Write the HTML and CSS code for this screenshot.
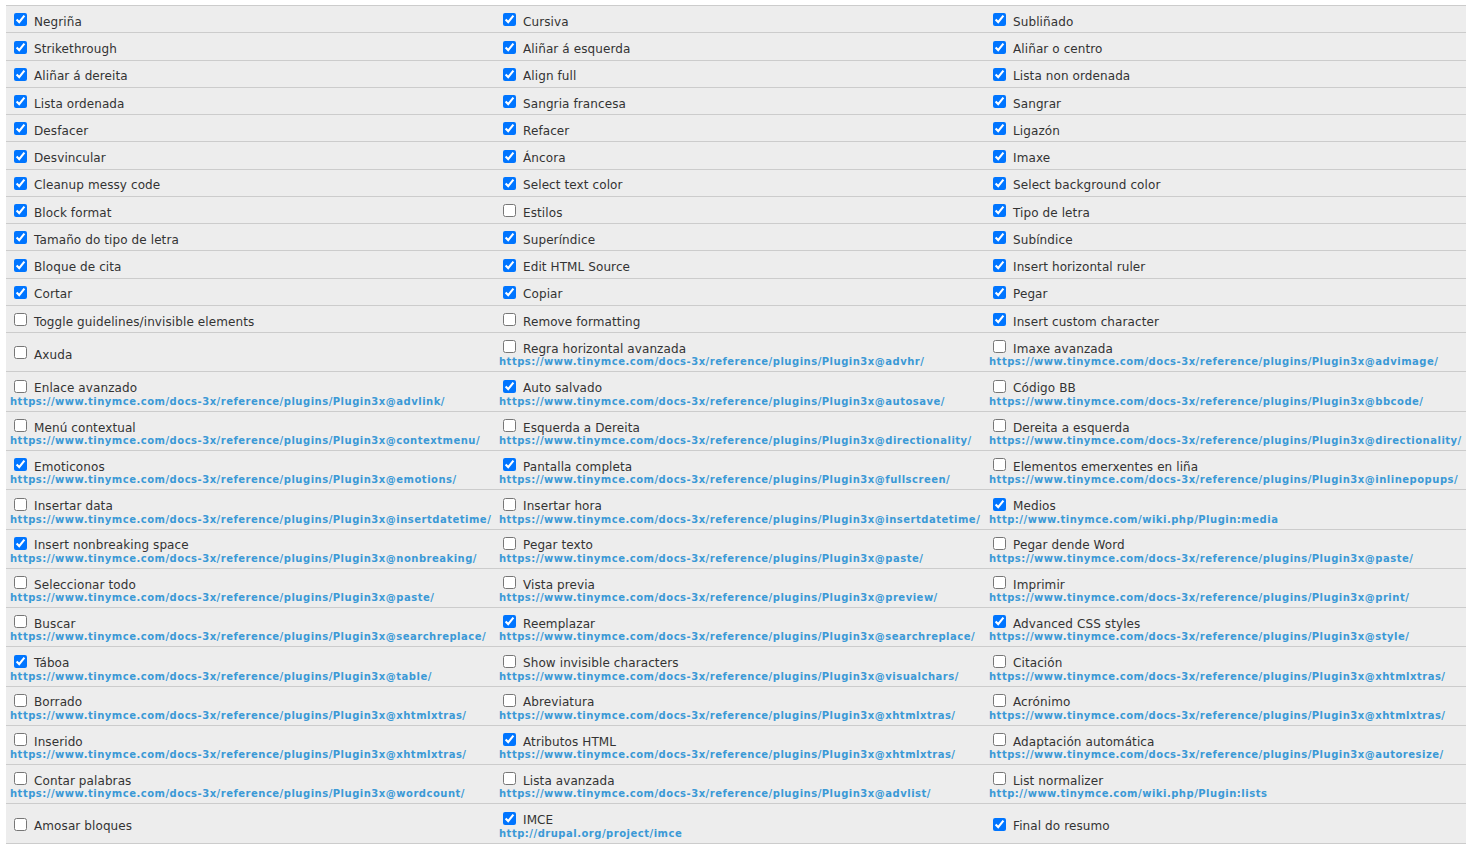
FILE: index.html
```html
<!DOCTYPE html>
<html lang="gl">
<head>
<meta charset="utf-8">
<title>Botóns e complementos</title>
<link rel="stylesheet" href="styles.css">
</head>
<body>
<table class="plugins">
<colgroup><col class="c1"><col class="c2"><col class="c3"></colgroup>
<tbody>
<tr>
<td><label class="opt"><input type="checkbox" checked><span>Negriña</span></label></td>
<td><label class="opt"><input type="checkbox" checked><span>Cursiva</span></label></td>
<td><label class="opt"><input type="checkbox" checked><span>Subliñado</span></label></td>
</tr>
<tr>
<td><label class="opt"><input type="checkbox" checked><span>Strikethrough</span></label></td>
<td><label class="opt"><input type="checkbox" checked><span>Aliñar á esquerda</span></label></td>
<td><label class="opt"><input type="checkbox" checked><span>Aliñar o centro</span></label></td>
</tr>
<tr>
<td><label class="opt"><input type="checkbox" checked><span>Aliñar á dereita</span></label></td>
<td><label class="opt"><input type="checkbox" checked><span>Align full</span></label></td>
<td><label class="opt"><input type="checkbox" checked><span>Lista non ordenada</span></label></td>
</tr>
<tr>
<td><label class="opt"><input type="checkbox" checked><span>Lista ordenada</span></label></td>
<td><label class="opt"><input type="checkbox" checked><span>Sangria francesa</span></label></td>
<td><label class="opt"><input type="checkbox" checked><span>Sangrar</span></label></td>
</tr>
<tr>
<td><label class="opt"><input type="checkbox" checked><span>Desfacer</span></label></td>
<td><label class="opt"><input type="checkbox" checked><span>Refacer</span></label></td>
<td><label class="opt"><input type="checkbox" checked><span>Ligazón</span></label></td>
</tr>
<tr>
<td><label class="opt"><input type="checkbox" checked><span>Desvincular</span></label></td>
<td><label class="opt"><input type="checkbox" checked><span>Áncora</span></label></td>
<td><label class="opt"><input type="checkbox" checked><span>Imaxe</span></label></td>
</tr>
<tr>
<td><label class="opt"><input type="checkbox" checked><span>Cleanup messy code</span></label></td>
<td><label class="opt"><input type="checkbox" checked><span>Select text color</span></label></td>
<td><label class="opt"><input type="checkbox" checked><span>Select background color</span></label></td>
</tr>
<tr>
<td><label class="opt"><input type="checkbox" checked><span>Block format</span></label></td>
<td><label class="opt"><input type="checkbox"><span>Estilos</span></label></td>
<td><label class="opt"><input type="checkbox" checked><span>Tipo de letra</span></label></td>
</tr>
<tr>
<td><label class="opt"><input type="checkbox" checked><span>Tamaño do tipo de letra</span></label></td>
<td><label class="opt"><input type="checkbox" checked><span>Superíndice</span></label></td>
<td><label class="opt"><input type="checkbox" checked><span>Subíndice</span></label></td>
</tr>
<tr>
<td><label class="opt"><input type="checkbox" checked><span>Bloque de cita</span></label></td>
<td><label class="opt"><input type="checkbox" checked><span>Edit HTML Source</span></label></td>
<td><label class="opt"><input type="checkbox" checked><span>Insert horizontal ruler</span></label></td>
</tr>
<tr>
<td><label class="opt"><input type="checkbox" checked><span>Cortar</span></label></td>
<td><label class="opt"><input type="checkbox" checked><span>Copiar</span></label></td>
<td><label class="opt"><input type="checkbox" checked><span>Pegar</span></label></td>
</tr>
<tr>
<td><label class="opt"><input type="checkbox"><span>Toggle guidelines/invisible elements</span></label></td>
<td><label class="opt"><input type="checkbox"><span>Remove formatting</span></label></td>
<td><label class="opt"><input type="checkbox" checked><span>Insert custom character</span></label></td>
</tr>
<tr>
<td><label class="opt"><input type="checkbox"><span>Axuda</span></label></td>
<td><label class="opt"><input type="checkbox"><span>Regra horizontal avanzada</span></label><div class="url">https://www.tinymce.com/docs-3x/reference/plugins/Plugin3x@advhr/</div></td>
<td><label class="opt"><input type="checkbox"><span>Imaxe avanzada</span></label><div class="url">https://www.tinymce.com/docs-3x/reference/plugins/Plugin3x@advimage/</div></td>
</tr>
<tr>
<td><label class="opt"><input type="checkbox"><span>Enlace avanzado</span></label><div class="url">https://www.tinymce.com/docs-3x/reference/plugins/Plugin3x@advlink/</div></td>
<td><label class="opt"><input type="checkbox" checked><span>Auto salvado</span></label><div class="url">https://www.tinymce.com/docs-3x/reference/plugins/Plugin3x@autosave/</div></td>
<td><label class="opt"><input type="checkbox"><span>Código BB</span></label><div class="url">https://www.tinymce.com/docs-3x/reference/plugins/Plugin3x@bbcode/</div></td>
</tr>
<tr>
<td><label class="opt"><input type="checkbox"><span>Menú contextual</span></label><div class="url">https://www.tinymce.com/docs-3x/reference/plugins/Plugin3x@contextmenu/</div></td>
<td><label class="opt"><input type="checkbox"><span>Esquerda a Dereita</span></label><div class="url">https://www.tinymce.com/docs-3x/reference/plugins/Plugin3x@directionality/</div></td>
<td><label class="opt"><input type="checkbox"><span>Dereita a esquerda</span></label><div class="url">https://www.tinymce.com/docs-3x/reference/plugins/Plugin3x@directionality/</div></td>
</tr>
<tr>
<td><label class="opt"><input type="checkbox" checked><span>Emoticonos</span></label><div class="url">https://www.tinymce.com/docs-3x/reference/plugins/Plugin3x@emotions/</div></td>
<td><label class="opt"><input type="checkbox" checked><span>Pantalla completa</span></label><div class="url">https://www.tinymce.com/docs-3x/reference/plugins/Plugin3x@fullscreen/</div></td>
<td><label class="opt"><input type="checkbox"><span>Elementos emerxentes en liña</span></label><div class="url">https://www.tinymce.com/docs-3x/reference/plugins/Plugin3x@inlinepopups/</div></td>
</tr>
<tr>
<td><label class="opt"><input type="checkbox"><span>Insertar data</span></label><div class="url">https://www.tinymce.com/docs-3x/reference/plugins/Plugin3x@insertdatetime/</div></td>
<td><label class="opt"><input type="checkbox"><span>Insertar hora</span></label><div class="url">https://www.tinymce.com/docs-3x/reference/plugins/Plugin3x@insertdatetime/</div></td>
<td><label class="opt"><input type="checkbox" checked><span>Medios</span></label><div class="url">http://www.tinymce.com/wiki.php/Plugin:media</div></td>
</tr>
<tr>
<td><label class="opt"><input type="checkbox" checked><span>Insert nonbreaking space</span></label><div class="url">https://www.tinymce.com/docs-3x/reference/plugins/Plugin3x@nonbreaking/</div></td>
<td><label class="opt"><input type="checkbox"><span>Pegar texto</span></label><div class="url">https://www.tinymce.com/docs-3x/reference/plugins/Plugin3x@paste/</div></td>
<td><label class="opt"><input type="checkbox"><span>Pegar dende Word</span></label><div class="url">https://www.tinymce.com/docs-3x/reference/plugins/Plugin3x@paste/</div></td>
</tr>
<tr>
<td><label class="opt"><input type="checkbox"><span>Seleccionar todo</span></label><div class="url">https://www.tinymce.com/docs-3x/reference/plugins/Plugin3x@paste/</div></td>
<td><label class="opt"><input type="checkbox"><span>Vista previa</span></label><div class="url">https://www.tinymce.com/docs-3x/reference/plugins/Plugin3x@preview/</div></td>
<td><label class="opt"><input type="checkbox"><span>Imprimir</span></label><div class="url">https://www.tinymce.com/docs-3x/reference/plugins/Plugin3x@print/</div></td>
</tr>
<tr>
<td><label class="opt"><input type="checkbox"><span>Buscar</span></label><div class="url">https://www.tinymce.com/docs-3x/reference/plugins/Plugin3x@searchreplace/</div></td>
<td><label class="opt"><input type="checkbox" checked><span>Reemplazar</span></label><div class="url">https://www.tinymce.com/docs-3x/reference/plugins/Plugin3x@searchreplace/</div></td>
<td><label class="opt"><input type="checkbox" checked><span>Advanced CSS styles</span></label><div class="url">https://www.tinymce.com/docs-3x/reference/plugins/Plugin3x@style/</div></td>
</tr>
<tr>
<td><label class="opt"><input type="checkbox" checked><span>Táboa</span></label><div class="url">https://www.tinymce.com/docs-3x/reference/plugins/Plugin3x@table/</div></td>
<td><label class="opt"><input type="checkbox"><span>Show invisible characters</span></label><div class="url">https://www.tinymce.com/docs-3x/reference/plugins/Plugin3x@visualchars/</div></td>
<td><label class="opt"><input type="checkbox"><span>Citación</span></label><div class="url">https://www.tinymce.com/docs-3x/reference/plugins/Plugin3x@xhtmlxtras/</div></td>
</tr>
<tr>
<td><label class="opt"><input type="checkbox"><span>Borrado</span></label><div class="url">https://www.tinymce.com/docs-3x/reference/plugins/Plugin3x@xhtmlxtras/</div></td>
<td><label class="opt"><input type="checkbox"><span>Abreviatura</span></label><div class="url">https://www.tinymce.com/docs-3x/reference/plugins/Plugin3x@xhtmlxtras/</div></td>
<td><label class="opt"><input type="checkbox"><span>Acrónimo</span></label><div class="url">https://www.tinymce.com/docs-3x/reference/plugins/Plugin3x@xhtmlxtras/</div></td>
</tr>
<tr>
<td><label class="opt"><input type="checkbox"><span>Inserido</span></label><div class="url">https://www.tinymce.com/docs-3x/reference/plugins/Plugin3x@xhtmlxtras/</div></td>
<td><label class="opt"><input type="checkbox" checked><span>Atributos HTML</span></label><div class="url">https://www.tinymce.com/docs-3x/reference/plugins/Plugin3x@xhtmlxtras/</div></td>
<td><label class="opt"><input type="checkbox"><span>Adaptación automática</span></label><div class="url">https://www.tinymce.com/docs-3x/reference/plugins/Plugin3x@autoresize/</div></td>
</tr>
<tr>
<td><label class="opt"><input type="checkbox"><span>Contar palabras</span></label><div class="url">https://www.tinymce.com/docs-3x/reference/plugins/Plugin3x@wordcount/</div></td>
<td><label class="opt"><input type="checkbox"><span>Lista avanzada</span></label><div class="url">https://www.tinymce.com/docs-3x/reference/plugins/Plugin3x@advlist/</div></td>
<td><label class="opt"><input type="checkbox"><span>List normalizer</span></label><div class="url">http://www.tinymce.com/wiki.php/Plugin:lists</div></td>
</tr>
<tr>
<td><label class="opt"><input type="checkbox"><span>Amosar bloques</span></label></td>
<td><label class="opt"><input type="checkbox" checked><span>IMCE</span></label><div class="url">http://drupal.org/project/imce</div></td>
<td><label class="opt"><input type="checkbox" checked><span>Final do resumo</span></label></td>
</tr>
</tbody>
</table>
</body>
</html>
```

FILE: styles.css
```css
html, body {
  background: #ffffff;
}
body {
  margin: 5px 5px 0 6px;
  font-family: "DejaVu Sans", Verdana, sans-serif;
  font-size: 12px;
  color: #333333;
}
.plugins {
  width: 1460px;
  table-layout: fixed;
  border-collapse: collapse;
  background: #ededed;
}
.c1 { width: 489px; }
.c2 { width: 490px; }
.c3 { width: 481px; }
.plugins td {
  padding: 4px;
  vertical-align: middle;
  border-top: 1px solid #cccccc;
  border-bottom: 1px solid #cccccc;
  white-space: nowrap;
  overflow: hidden;
}
.opt {
  display: flex;
  align-items: flex-start;
  height: 18.27px;
}
.opt input {
  flex: none;
  width: 13px;
  height: 13px;
  margin: 3.3px 3px 0 4px;
}
.opt span {
  margin-top: 4.8px;
  padding-left: 4px;
  line-height: 14px;
  letter-spacing: 0.1px;
}
.url {
  padding-top: 2px;
  font-size: 10px;
  font-weight: bold;
  line-height: 10px;
  letter-spacing: 0.5px;
  color: #3b99d6;
}
```
